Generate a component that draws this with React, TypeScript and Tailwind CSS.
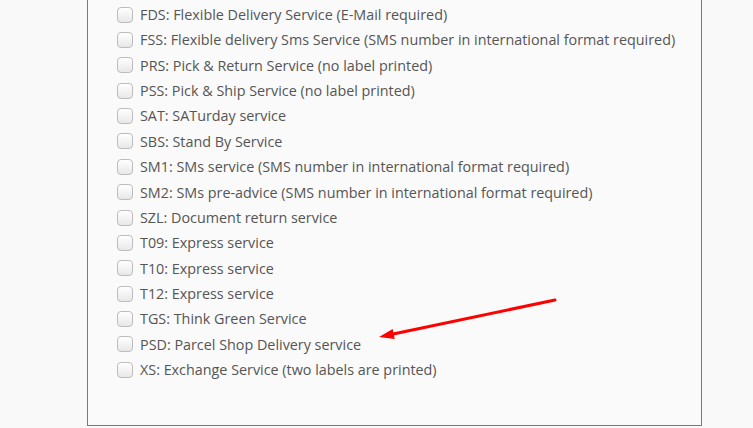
import React from "react";

const services = [
  "FDS: Flexible Delivery Service (E-Mail required)",
  "FSS: Flexible delivery Sms Service (SMS number in international format required)",
  "PRS: Pick & Return Service (no label printed)",
  "PSS: Pick & Ship Service (no label printed)",
  "SAT: SATurday service",
  "SBS: Stand By Service",
  "SM1: SMs service (SMS number in international format required)",
  "SM2: SMs pre-advice (SMS number in international format required)",
  "SZL: Document return service",
  "T09: Express service",
  "T10: Express service",
  "T12: Express service",
  "TGS: Think Green Service",
  "PSD: Parcel Shop Delivery service",
  "XS: Exchange Service (two labels are printed)",
];

const Checkbox = () => (
  <span className="w-[16px] h-[16px] shrink-0 rounded-[4px] border border-[#bcbcbc] bg-gradient-to-b from-[#ffffff] to-[#e8e8e8]" />
);

export default function App() {
  return (
    <div className="relative w-[753px] h-[428px] overflow-hidden bg-[#f9f9f9] font-['Open_Sans',sans-serif]">
      <div className="ml-[87px] w-[615px] h-[426px] border-x border-b border-[#7a7a7a] bg-[#fafafa] pt-[2px] pl-[29px]">
        {services.map((s) => (
          <label key={s} className="flex items-center gap-[7px] h-[25.36px] text-[14.35px] text-[#555555] leading-none">
            <Checkbox />
            <span className="pt-[1px]">{s}</span>
          </label>
        ))}
      </div>

      {/* annotation arrow */}
      <svg className="absolute left-0 top-0" width="753" height="428" viewBox="0 0 753 428">
        <line x1="555" y1="300" x2="392" y2="334.3" stroke="#ff0000" strokeWidth="3" strokeLinecap="round" />
        <polygon points="379,337 392.7,329.1 394.7,338.9" fill="#ff0000" />
      </svg>
    </div>
  );
}
